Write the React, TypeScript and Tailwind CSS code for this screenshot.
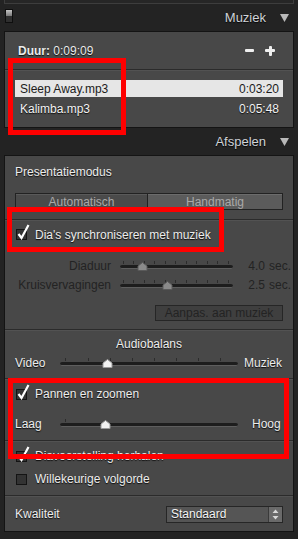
import React from 'react';

const shadow = '[text-shadow:0_1px_1px_rgba(0,0,0,0.85)]';

function Header({ title }: { title: string }) {
  return (
    <div className="h-[27px] flex items-center justify-end pr-[9px] pt-[1px]">
      <span className={`text-[13px] text-[#cfd3d8] ${shadow}`}>{title}</span>
      <svg width="9" height="8" viewBox="0 0 9 8" className="ml-[14px]">
        <path d="M0 0 H9 L4.5 8 Z" fill="#b9b9b9" />
      </svg>
    </div>
  );
}

function Check({ checked }: { checked: boolean }) {
  return (
    <span className="relative w-[11px] h-[11px] shrink-0 border border-[#141414] bg-[#333333]">
      {checked && (
        <svg className="absolute left-[0px] top-[-6px]" width="13" height="16" viewBox="0 0 13 16">
          <path d="M1.5 10 L4.5 14 L11.5 1" stroke="#ffffff" strokeWidth="2.2" fill="none" />
        </svg>
      )}
    </span>
  );
}

function CheckRow({ label, checked, h }: { label: string; checked: boolean; h: string }) {
  return (
    <div className={`flex items-center gap-[8px] pl-[11px] ${h}`}>
      <Check checked={checked} />
      <span className={`text-[12px] text-[#ededed] ${shadow}`}>{label}</span>
    </div>
  );
}

function Slider({
  width,
  pos,
  ticks,
  light,
}: {
  width: number;
  pos: number;
  ticks: number[];
  light: boolean;
}) {
  return (
    <div className="relative h-[14px] shrink-0" style={{ width }}>
      {ticks.map((t) => (
        <span
          key={t}
          className="absolute top-[2px] w-px h-[3px] bg-[#2c2c2c]"
          style={{ left: t }}
        />
      ))}
      <span className="absolute left-0 right-0 top-[6px] h-[4px] rounded-full bg-[#1d1d1d] border-b border-[#5e5e5e]" />
      <svg
        className="absolute top-[3px]"
        style={{ left: pos - 5 }}
        width="11"
        height="9"
        viewBox="0 0 11 9"
      >
        <path
          d="M5.5 0.5 L10 4 V8.5 H1 V4 Z"
          fill={light ? '#f2f2f2' : '#8a8a8a'}
          stroke={light ? '#9a9a9a' : '#5a5a5a'}
        />
      </svg>
    </div>
  );
}

function Sep() {
  return <div className="h-px bg-[#2b2b2b] shadow-[0_1px_0_#525252]" />;
}

export default function App() {
  return (
    <div className="relative w-[298px] h-[539px] overflow-hidden bg-[#232323] font-['Liberation_Sans',Arial,sans-serif]">
      <div className="h-[4px] mx-[4px] border-x border-b border-[#3d3d3d] bg-[#262626]" />

      {/* Muziek */}
      <div className="relative">
        <div className="absolute left-[5px] top-[5px] w-[8px] h-[14px] border border-[#0e0e0e] flex flex-col">
          <span className="h-1/2 bg-gradient-to-b from-[#c4c4c4] to-[#7a7a7a]" />
          <span className="h-1/2 bg-[#2f2f2f]" />
        </div>
        <Header title="Muziek" />
      </div>
      <div className="mx-[4px] border border-[#141414] bg-[#484848]">
        <div className="h-[37px] flex items-center justify-between pl-[13px] pr-[18px]">
          <span className={`text-[12px] text-[#eaeaea] ${shadow}`}>
            <b>Duur:</b> 0:09:09
          </span>
          <div className="flex items-center gap-[11px]">
            <span className="w-[9px] h-[3px] bg-[#efefef] rounded-[1px]" />
            <span className="relative w-[10px] h-[10px]">
              <span className="absolute left-0 top-[3.5px] w-[10px] h-[3px] bg-[#efefef] rounded-[1px]" />
              <span className="absolute top-0 left-[3.5px] w-[3px] h-[10px] bg-[#efefef] rounded-[1px]" />
            </span>
          </div>
        </div>
        <Sep />
        <div className="px-[10px] pt-[10px] pb-[10px] flex flex-col gap-[3px] text-[12px]">
          <div className="h-[17px] flex items-center justify-between pl-[5px] pr-[4px] bg-[#e6e6e6] text-[#1c1c1c]">
            <span>Sleep Away.mp3</span>
            <span>0:03:20</span>
          </div>
          <div className={`h-[17px] flex items-center justify-between pl-[5px] pr-[4px] text-[#f2f2f2] ${shadow}`}>
            <span>Kalimba.mp3</span>
            <span>0:05:48</span>
          </div>
        </div>
      </div>

      {/* Afspelen */}
      <Header title="Afspelen" />
      <div className="mx-[4px] border border-[#141414] bg-[#484848]">
        <div className={`h-[37px] pt-[9px] pl-[10px] text-[12px] leading-[14px] text-[#ededed] ${shadow}`}>
          Presentatiemodus
        </div>
        <div className="mx-[10px] h-[17px] flex text-[12px] text-[#a9a9a9]">
          <div className="w-[133px] flex items-center justify-center bg-[#4a4a4a] border border-[#222222] shadow-[inset_0_1px_0_#5a5a5a]">
            Automatisch
          </div>
          <div className="flex-1 flex items-center justify-center bg-[#5b5b5b] border border-l-0 border-[#222222] shadow-[inset_0_1px_0_#6c6c6c]">
            Handmatig
          </div>
        </div>
        <div className="h-[9px]" />
        <Sep />
        <CheckRow label="Dia's synchroniseren met muziek" checked h="h-[29px]" />
        <div className="h-[7px]" />
        {[
          { label: 'Diaduur', pos: 22, value: '4.0' },
          { label: 'Kruisvervagingen', pos: 47, value: '2.5' },
        ].map((r) => (
          <div key={r.label} className="h-[19px] flex items-center text-[12px] text-[#232323]">
            <span className="w-[106px] text-right">{r.label}</span>
            <span className="w-[9px]" />
            <Slider width={113} pos={r.pos} ticks={[3, 13, 24, 34, 45, 55, 66, 76, 87, 97, 108]} light={false} />
            <span className="ml-[12px] w-[20px] text-right">{r.value}</span>
            <span className="ml-[4px]">sec.</span>
          </div>
        ))}
        <div className="h-[11px]" />
        <div className="flex justify-end pr-[10px]">
          <div className="w-[128px] h-[16px] flex items-center justify-center bg-[#3f3f3f] border border-[#262626] text-[12px] text-[#232323]">
            Aanpas. aan muziek
          </div>
        </div>
        <div className="h-[8px]" />
        <Sep />
        <div className={`pt-[7px] h-[21px] text-center text-[12px] leading-[14px] text-[#ededed] ${shadow}`}>
          Audiobalans
        </div>
        <div className="h-[5px]" />
        <div className={`h-[14px] flex items-center text-[12px] text-[#ededed] ${shadow}`}>
          <span className="w-[55px] pl-[10px]">Video</span>
          <Slider width={178} pos={47} ticks={[5, 28, 50, 72, 94, 116, 138, 160]} light />
          <span className="ml-[6px]">Muziek</span>
        </div>
        <div className="h-[8px]" />
        <Sep />
        <CheckRow label="Pannen en zoomen" checked h="h-[30px]" />
        <div className="h-[8px]" />
        <div className={`h-[14px] flex items-center text-[12px] text-[#ededed] ${shadow}`}>
          <span className="w-[55px] pl-[10px]">Laag</span>
          <Slider width={178} pos={45} ticks={[5]} light />
          <span className="ml-[14px]">Hoog</span>
        </div>
        <div className="h-[9px]" />
        <Sep />
        <div className="pt-[4px] flex flex-col gap-[1px]">
          <CheckRow label="Diavoorstelling herhalen" checked h="h-[22px]" />
          <CheckRow label="Willekeurige volgorde" checked={false} h="h-[22px]" />
        </div>
        <div className="h-[5px]" />
        <Sep />
        <div className="pt-[9px] pb-[8px] pl-[10px] pr-[10px] flex items-center justify-between">
          <span className={`text-[12px] text-[#ededed] ${shadow}`}>Kwaliteit</span>
          <div className="w-[117px] h-[17px] flex border border-[#262626] bg-[#555555]">
            <span className={`flex-1 flex items-center pl-[4px] text-[12px] text-[#f4f4f4] ${shadow}`}>Standaard</span>
            <span className="w-[14px] flex items-center justify-center bg-[#6a6a6a] border-l border-[#3a3a3a]">
              <svg width="7" height="11" viewBox="0 0 7 11">
                <path d="M3.5 0.5 L6.5 4 H0.5 Z M3.5 10.5 L6.5 7 H0.5 Z" fill="#d8d8d8" />
              </svg>
            </span>
          </div>
        </div>
      </div>

      {/* annotation boxes */}
      <div className="absolute left-[8px] top-[58px] w-[118px] h-[77px] border-[5px] border-[#ff0000]" />
      <div className="absolute left-[7px] top-[207px] w-[217px] h-[45px] border-[5px] border-[#ff0000]" />
      <div className="absolute left-[8px] top-[378px] w-[281px] h-[81px] border-[5px] border-[#ff0000]" />
    </div>
  );
}
